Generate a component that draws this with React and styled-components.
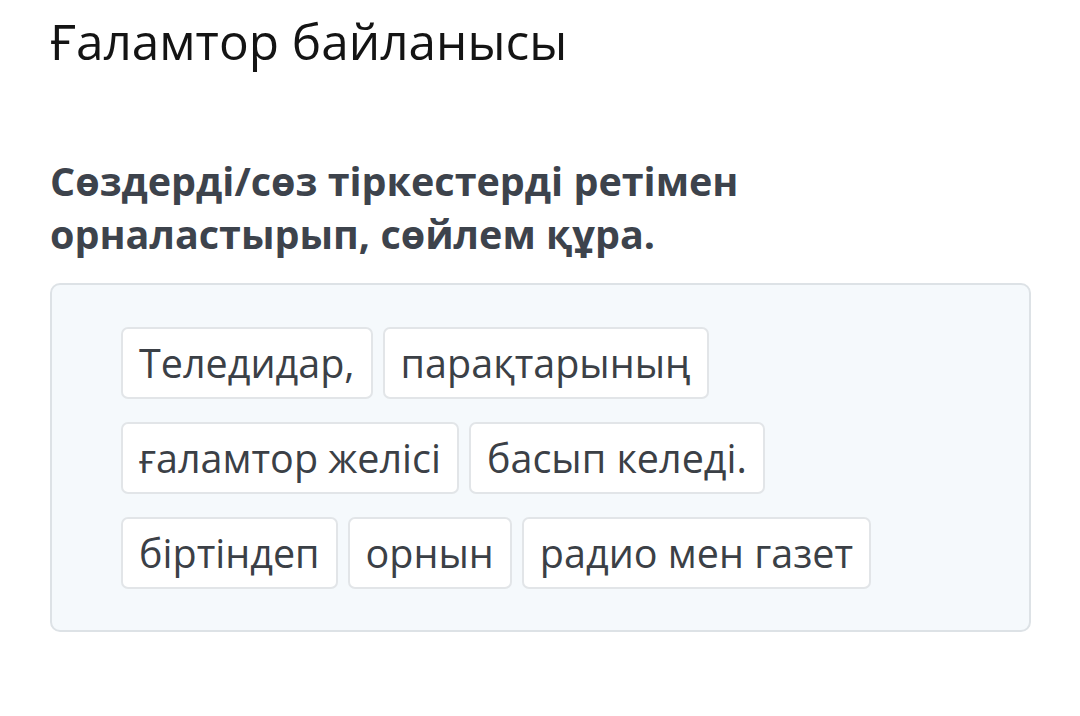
import React from 'react'
import styled, { createGlobalStyle } from 'styled-components'

const GlobalStyle = createGlobalStyle`
  html, body {
    margin: 0;
    padding: 0;
    background: #fff;
    font-family: "Open Sans", "Noto Sans", sans-serif;
  }
`

const Page = styled.div`
  padding: 9px 49px 0 50px;
`

const Title = styled.h1`
  margin: 0;
  font-size: 49.5px;
  font-weight: 400;
  line-height: 64px;
  color: #141414;
`

const Question = styled.h2`
  margin: 82px 0 0;
  font-size: 39.5px;
  font-weight: 700;
  line-height: 53px;
  color: #3d434c;
`

const Board = styled.div`
  margin-top: 22px;
  border: 2px solid #dde2e6;
  border-radius: 10px;
  background: #f5f9fc;
  padding: 42px 60px 41px 69px;
  display: flex;
  flex-direction: column;
  gap: 23px;
`

const Row = styled.div`
  display: flex;
  gap: 10px;
`

const Chip = styled.div`
  padding: 0 16px;
  height: 72px;
  box-sizing: border-box;
  display: flex;
  align-items: center;
  background: #fff;
  border: 2px solid #e2e5e8;
  border-radius: 7px;
  font-size: 39.5px;
  color: #3b4046;
  white-space: nowrap;
`

const rows = [
  ['Теледидар,', 'парақтарының'],
  ['ғаламтор желісі', 'басып келеді.'],
  ['біртіндеп', 'орнын', 'радио мен газет'],
]

export default function App() {
  return (
    <Page>
      <GlobalStyle />
      <Title>Ғаламтор байланысы</Title>
      <Question>
        Сөздерді/сөз тіркестерді ретімен
        <br />
        орналастырып, сөйлем құра.
      </Question>
      <Board>
        {rows.map((words, i) => (
          <Row key={i}>
            {words.map((w) => (
              <Chip key={w}>{w}</Chip>
            ))}
          </Row>
        ))}
      </Board>
    </Page>
  )
}
